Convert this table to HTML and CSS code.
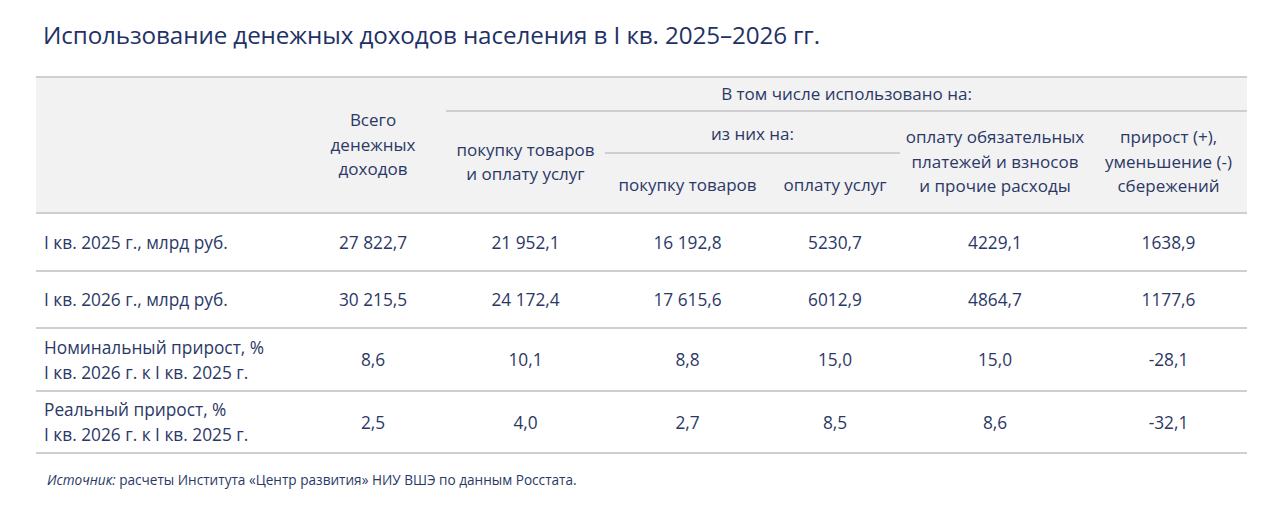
FILE: index.html
```html
<!DOCTYPE html>
<html lang="ru">
<head>
<meta charset="utf-8">
<link rel="stylesheet" href="styles.css">
</head>
<body>
<div class="page">
  <h1 class="title">Использование денежных доходов населения в I кв. 2025–2026 гг.</h1>
  <table class="tbl">
    <colgroup>
      <col class="c1"><col class="c2"><col class="c3"><col class="c4"><col class="c5"><col class="c6"><col class="c7">
    </colgroup>
    <thead>
      <tr class="h1">
        <th rowspan="3" class="blank"></th>
        <th rowspan="3">Всего<br>денежных<br>доходов</th>
        <th colspan="5" class="ruled">В том числе использовано на:</th>
      </tr>
      <tr class="h2">
        <th rowspan="2">покупку товаров<br>и оплату услуг</th>
        <th colspan="2" class="ruled sub">из них на:</th>
        <th rowspan="2">оплату обязательных<br>платежей и взносов<br>и прочие расходы</th>
        <th rowspan="2">прирост (+),<br>уменьшение (-)<br>сбережений</th>
      </tr>
      <tr class="h3">
        <th>покупку товаров</th>
        <th>оплату услуг</th>
      </tr>
    </thead>
    <tbody>
      <tr class="r1">
        <td class="lbl">I кв. 2025 г., млрд руб.</td>
        <td>27 822,7</td><td>21 952,1</td><td>16 192,8</td><td>5230,7</td><td>4229,1</td><td>1638,9</td>
      </tr>
      <tr class="r2">
        <td class="lbl">I кв. 2026 г., млрд руб.</td>
        <td>30 215,5</td><td>24 172,4</td><td>17 615,6</td><td>6012,9</td><td>4864,7</td><td>1177,6</td>
      </tr>
      <tr class="r3">
        <td class="lbl">Номинальный прирост, %<br>I кв. 2026 г. к I кв. 2025 г.</td>
        <td>8,6</td><td>10,1</td><td>8,8</td><td>15,0</td><td>15,0</td><td>-28,1</td>
      </tr>
      <tr class="r4">
        <td class="lbl">Реальный прирост, %<br>I кв. 2026 г. к I кв. 2025 г.</td>
        <td>2,5</td><td>4,0</td><td>2,7</td><td>8,5</td><td>8,6</td><td>-32,1</td>
      </tr>
    </tbody>
  </table>
  <p class="note"><em>Источник:</em> расчеты Института «Центр развития» НИУ ВШЭ по данным Росстата.</p>
</div>
</body>
</html>
```
FILE: styles.css
```css
html, body {
  margin: 0;
  padding: 0;
  background: #ffffff;
}
body {
  font-family: "Open Sans", "Noto Sans", sans-serif;
  color: #2b3866;
}
.page {
  padding: 18px 33px 0 36px;
}
.title {
  margin: 0 0 0 7px;
  font-weight: 400;
  font-size: 24.2px;
  line-height: 34px;
  color: #1f3266;
  letter-spacing: -0.1px;
}
.tbl {
  margin-top: 24px;
  width: 1211px;
  border-collapse: collapse;
  table-layout: fixed;
}
.c1 { width: 264px; }
.c2 { width: 146px; }
.c3 { width: 159px; }
.c4 { width: 165px; }
.c5 { width: 130px; }
.c6 { width: 190px; }
.c7 { width: 157px; }

.tbl thead th {
  background: #f2f2f2;
  font-weight: 400;
  font-size: 17px;
  line-height: 24.5px;
  text-align: center;
  padding: 0;
  vertical-align: middle;
}
.tbl thead tr.h1 th {
  border-top: 2px solid #cfcfcf;
}
.tbl thead tr.h1 { height: 34px; }
.tbl thead tr.h2 { height: 42px; }
.tbl thead tr.h3 { height: 60px; }
.tbl thead tr.h3 th { padding-top: 4px; }
.tbl th.ruled {
  border-bottom: 2px solid #cfcfcf;
}
.tbl th.sub {
  padding-top: 4px;
}
.tbl tbody td {
  border-top: 2px solid #cfcfcf;
  border-bottom: 2px solid #cfcfcf;
  font-size: 17.3px;
  line-height: 25px;
  text-align: center;
  padding: 0;
  vertical-align: middle;
}
.tbl tbody td.lbl {
  text-align: left;
  padding-left: 8px;
}
.tbl tbody tr.r1 { height: 58px; }
.tbl tbody tr.r2 { height: 57px; }
.tbl tbody tr.r3 { height: 63px; }
.tbl tbody tr.r4 { height: 62px; }
.note {
  margin: 17px 0 0 11px;
  font-size: 13.6px;
  line-height: 18px;
}
.note em {
  font-style: italic;
}
```
